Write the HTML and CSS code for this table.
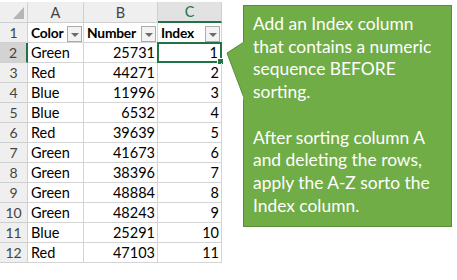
FILE: index.html
```html
<!DOCTYPE html>
<html>
<head>
<meta charset="utf-8">
<link rel="stylesheet" href="styles.css">
</head>
<body>
<div class="page">
  <div class="sheet">
    <div class="hdr corner"></div>
    <div class="hdr col">A</div>
    <div class="hdr col">B</div>
    <div class="hdr col sel">C</div>

    <div class="rn">1</div>
    <div class="cell th"><span>Color</span><i class="fb"></i></div>
    <div class="cell th"><span>Number</span><i class="fb"></i></div>
    <div class="cell th"><span>Index</span><i class="fb"></i></div>

    <div class="rn rsel">2</div><div class="cell">Green</div><div class="cell num">25731</div><div class="cell num active">1<i class="handle"></i></div>
    <div class="rn">3</div><div class="cell">Red</div><div class="cell num">44271</div><div class="cell num">2</div>
    <div class="rn">4</div><div class="cell">Blue</div><div class="cell num">11996</div><div class="cell num">3</div>
    <div class="rn">5</div><div class="cell">Blue</div><div class="cell num">6532</div><div class="cell num">4</div>
    <div class="rn">6</div><div class="cell">Red</div><div class="cell num">39639</div><div class="cell num">5</div>
    <div class="rn">7</div><div class="cell">Green</div><div class="cell num">41673</div><div class="cell num">6</div>
    <div class="rn">8</div><div class="cell">Green</div><div class="cell num">38396</div><div class="cell num">7</div>
    <div class="rn">9</div><div class="cell">Green</div><div class="cell num">48884</div><div class="cell num">8</div>
    <div class="rn">10</div><div class="cell">Green</div><div class="cell num">48243</div><div class="cell num">9</div>
    <div class="rn">11</div><div class="cell">Blue</div><div class="cell num">25291</div><div class="cell num">10</div>
    <div class="rn">12</div><div class="cell">Red</div><div class="cell num">47103</div><div class="cell num">11</div>
  </div>

  <div class="callout">
    <svg class="pointer" width="19" height="58" viewBox="0 0 19 58">
      <polygon points="18,0 1,11 18,56" fill="#70ad47" stroke="#5a8a3a" stroke-width="1"/>
      <rect x="17" y="0" width="2" height="58" fill="#70ad47"/>
    </svg>
    <p>Add an Index column<br>that contains a numeric<br>sequence BEFORE<br>sorting.</p>
    <p>After sorting column A<br>and deleting the rows,<br>apply the A-Z sorto the<br>Index column.</p>
  </div>
</div>
</body>
</html>
```

FILE: styles.css
```css
html, body {
  margin: 0;
  padding: 0;
  background: #ffffff;
}

.page {
  display: flex;
  align-items: flex-start;
  padding-top: 2px;
}

.sheet {
  display: grid;
  grid-template-columns: 28px 56px 74px 64px;
  grid-template-rows: 21px;
  grid-auto-rows: 20px;
  font-family: Lato, "Liberation Sans", sans-serif;
  font-size: 14.5px;
  color: #000;
}

.sheet > div {
  box-sizing: border-box;
  border-right: 1px solid #d4d4d4;
  border-bottom: 1px solid #d4d4d4;
  position: relative;
}

.hdr {
  background: #efefef;
  color: #444;
  display: flex;
  align-items: center;
  justify-content: center;
  font-size: 14.5px;
  border-color: #cfcfcf !important;
}

.hdr.sel {
  background: #e2e2e2;
  color: #217346;
  border-bottom: 2px solid #217346 !important;
}

.corner::after {
  content: "";
  position: absolute;
  right: 3px;
  bottom: 3px;
  width: 11px;
  height: 12px;
  background: #b5b5b5;
  clip-path: polygon(100% 0, 100% 100%, 0 100%);
}

.rn {
  background: #efefef;
  color: #444;
  display: flex;
  align-items: flex-end;
  justify-content: center;
  padding-bottom: 1px;
  font-size: 14px;
  border-color: #cfcfcf !important;
}

.rn.rsel {
  background: #d3d3d3;
  border-right: 2px solid #217346 !important;
}

.cell {
  display: flex;
  align-items: flex-end;
  padding: 0 2px 1px 3px;
  white-space: nowrap;
  overflow: visible;
}

.cell.num {
  justify-content: flex-end;
}

.cell.th {
  font-weight: bold;
  font-size: 13.8px;
  letter-spacing: -0.2px;
  justify-content: space-between;
  padding-right: 1px;
}

.fb {
  display: block;
  box-sizing: border-box;
  width: 15px;
  height: 16px;
  margin-bottom: -1px;
  border: 1px solid #ababab;
  background: #f3f3f3;
  position: relative;
  flex: none;
}

.fb::after {
  content: "";
  position: absolute;
  left: 3px;
  top: 6px;
  border-left: 4px solid transparent;
  border-right: 4px solid transparent;
  border-top: 4px solid #6b6b6b;
}

.cell.active {
  border: 2px solid #217346 !important;
  margin-top: -1px;
  margin-left: -1px;
  height: 21px;
  width: 65px;
  padding-bottom: 0;
}

.handle {
  position: absolute;
  right: -4px;
  bottom: -4px;
  width: 5px;
  height: 5px;
  background: #217346;
  border: 1px solid #fff;
}

.callout {
  position: relative;
  box-sizing: border-box;
  margin-left: 21px;
  margin-top: 3px;
  width: 209px;
  height: 222px;
  background: #70ad47;
  border: 1px solid #5a8a3a;
  color: #ffffff;
  font-family: Lato, "Liberation Sans", sans-serif;
  font-size: 17.4px;
  line-height: 22.7px;
  padding: 7px 6px 0 9px;
}

.callout p {
  margin: 0 0 22.7px 0;
  white-space: nowrap;
}

.pointer {
  position: absolute;
  left: -18px;
  top: 36px;
}
```
